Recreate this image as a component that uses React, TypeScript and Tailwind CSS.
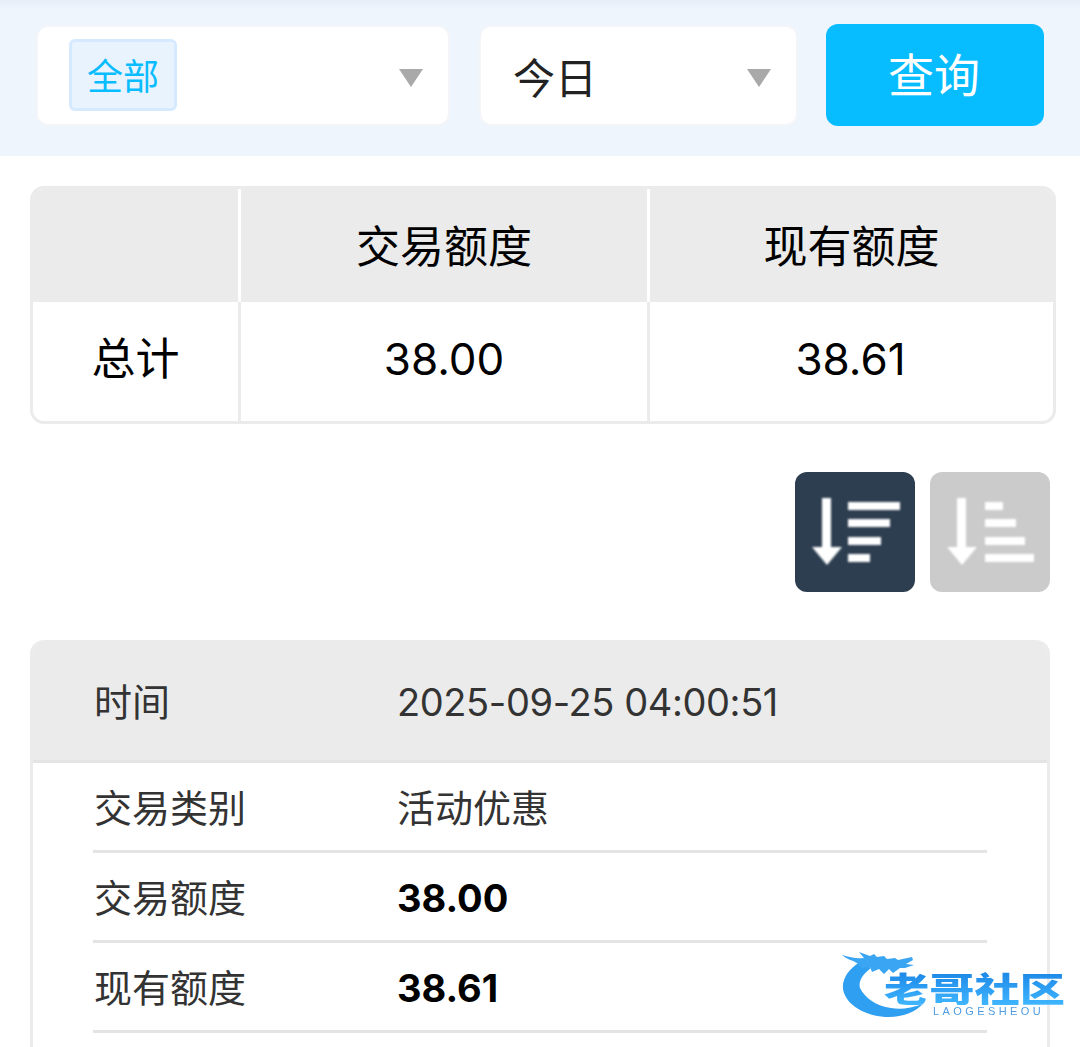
const font = "font-['Inter','Noto_Sans_CJK_SC',sans-serif]";

function Caret() {
  return <span className="mt-[4px] h-0 w-0 border-x-[12px] border-t-[18px] border-x-transparent border-t-[#a9a9a9]" />;
}

function SortIcon({ widths, x }: { widths: number[]; x: number }) {
  return (
    <svg width="120" height="120" viewBox="0 0 120 120" fill="#fff" className="blur-[1px]">
      <rect x="27" y="26" width="9" height="51" />
      <path d="M17 75h30l-15 18z" />
      {widths.map((w, i) => (
        <rect key={i} x={x} y={[30, 47, 65, 82][i]} width={w} height="8" />
      ))}
    </svg>
  );
}

function Row({ label, value, bold }: { label: string; value: string; bold?: boolean }) {
  return (
    <div className="flex h-[90px] items-center border-b-[3px] border-[#e4e4e4] pl-[1px] pt-[2px] text-[38px] leading-none text-[#333]">
      <span className="w-[303px]">{label}</span>
      <span className={bold ? 'font-bold text-black' : ''}>{value}</span>
    </div>
  );
}

function Watermark() {
  return (
    <div className="absolute left-[840px] top-[950px] h-[70px] w-[226px] blur-[0.7px]">
      <svg width="90" height="70" viewBox="0 0 90 70" className="absolute left-0 top-0">
        <path
          d="M20 12C7 20 0 32 4 43c5 14 24 24 45 24 14 0 26-5 34-13-12 4-22 6-32 4C36 56 25 48 20 38c-2-7 3-14 11-20z"
          fill="#2f9ff2"
        />
        <path
          d="M2 5c8 2 14 4 22 3l-5-6 11 4 4-2 3 3 7-1 3 3 8-1 3 2 14-3 1 3-7 4 8 1-9 3-5 0-7 5-4-4-5 5-5-5-7 3-2-5-8 1-5-5C12 10 6 9 2 5z"
          fill="#3aa5f2"
        />
      </svg>
      <span className="absolute left-[44px] top-[21px] origin-left scale-x-[1.33] whitespace-nowrap bg-gradient-to-b from-[#1c86e6] to-[#3fb6ff] bg-clip-text text-[34px] font-black leading-[34px] text-transparent font-['Noto_Sans_CJK_SC',sans-serif]">
        老哥社区
      </span>
      <span className="absolute left-[93px] top-[56px] whitespace-nowrap text-[11px] leading-[11px] tracking-[3.4px] text-[#4f9ce0] font-['Liberation_Sans',sans-serif]">
        LAOGESHEOU
      </span>
    </div>
  );
}

export default function App() {
  return (
    <div className={`relative h-[1047px] w-[1080px] overflow-hidden bg-white ${font}`}>
      <header className="h-[156px] bg-[#eef5fd] bg-gradient-to-b from-[#e6edf7] to-[#eef5fd] to-[6%] pl-[36px] pt-[24px]">
        <div className="flex items-start">
          <div className="mt-[1px] flex h-[101px] w-[414px] items-center justify-between rounded-[12px] border-2 border-[#f3f5f9] bg-white pl-[31px] pr-[25px]">
            <span className="-mt-[1px] flex h-[72px] w-[108px] items-center justify-center rounded-[6px] border-[3px] border-[#d5eaff] bg-[#e9f3fe] pt-[4px] text-[36px] leading-none text-[#07bcff]">
              全部
            </span>
            <Caret />
          </div>
          <div className="ml-[29px] mt-[1px] flex h-[101px] w-[319px] items-center justify-between rounded-[12px] border-2 border-[#f3f5f9] bg-white pl-[32px] pr-[25px]">
            <span className="pt-[7px] text-[42px] leading-none text-[#222]">今日</span>
            <Caret />
          </div>
          <button className="ml-[28px] h-[102px] w-[218px] rounded-[12px] bg-[#07bcff] pr-[2px] text-[46px] leading-none text-white">
            查询
          </button>
        </div>
      </header>

      <main className="pl-[30px]">
        <div className="mt-[30px] grid w-[1026px] grid-cols-[208px_409px_1fr] overflow-hidden rounded-[14px] border-[3px] border-[#ebebeb] text-[44px] leading-none text-black">
          <div className="h-[113px] border-r-[3px] border-white bg-[#ebebeb]" />
          <div className="flex h-[113px] items-center justify-center border-r-[3px] border-white bg-[#ebebeb] pt-[2px]">交易额度</div>
          <div className="flex h-[113px] items-center justify-center bg-[#ebebeb] pt-[2px]">现有额度</div>
          <div className="flex h-[119px] items-center justify-center border-r-[3px] border-[#ebebeb] pb-[6px]">总计</div>
          <div className="flex h-[119px] items-center justify-center border-r-[3px] border-[#ebebeb] pb-[5px]">38.00</div>
          <div className="flex h-[119px] items-center justify-center pb-[5px] pr-[2px]">38.61</div>
        </div>

        <div className="mt-[48px] flex w-[1020px] justify-end gap-[15px]">
          <div className="h-[120px] w-[120px] overflow-hidden rounded-[12px] bg-[#2d3e50]">
            <SortIcon widths={[52, 42, 33, 22]} x={53} />
          </div>
          <div className="h-[120px] w-[120px] overflow-hidden rounded-[12px] bg-[#cbcbcb]">
            <SortIcon widths={[18, 31, 40, 49]} x={55} />
          </div>
        </div>

        <div className="mt-[48px] w-[1020px] overflow-hidden rounded-t-[14px] border-x-[3px] border-[#ebebeb]">
          <div className="flex h-[123px] items-center border-b-[3px] border-[#e4e4e4] bg-[#ebebeb] pl-[61px] pt-[3px] text-[38px] leading-none text-[#333]">
            <span className="w-[303px]">时间</span>
            <span className="tracking-[-0.4px]">2025-09-25 04:00:51</span>
          </div>
          <div className="ml-[60px] w-[894px]">
            <Row label="交易类别" value="活动优惠" />
            <Row label="交易额度" value="38.00" bold />
            <Row label="现有额度" value="38.61" bold />
            <div className="h-[90px]" />
          </div>
        </div>
      </main>

      <Watermark />
    </div>
  );
}
